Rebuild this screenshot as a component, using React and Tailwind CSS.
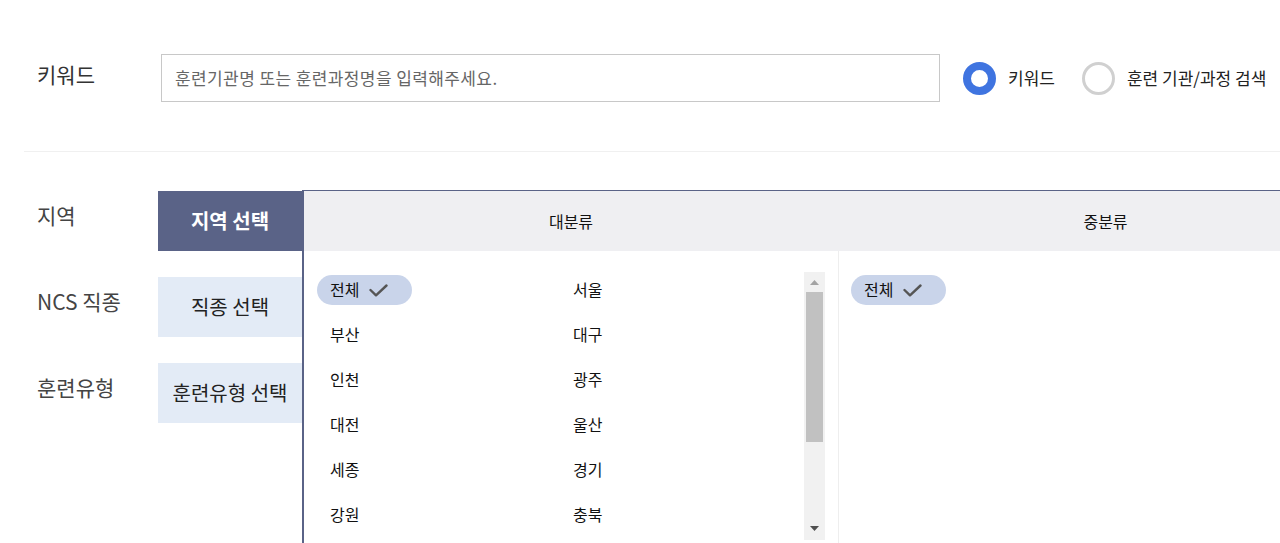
import React from "react";

const font = { fontFamily: "'Noto Sans CJK KR', 'Noto Sans', sans-serif" };

function Check() {
  return (
    <svg width="19" height="13" viewBox="0 0 19 13" fill="none">
      <polyline points="1.5,6 7,11.3 17.5,1.5" stroke="#555" strokeWidth="2.4" strokeLinecap="round" strokeLinejoin="round" />
    </svg>
  );
}

function Chip() {
  return (
    <div className="inline-flex h-[30px] items-center gap-[10px] rounded-full bg-[#c9d4ea] pl-[13px] pr-[24px] text-[16px] text-[#111]">
      <span className="pb-[2px]">전체</span>
      <Check />
    </div>
  );
}

const regions = [
  ["전체", "서울"],
  ["부산", "대구"],
  ["인천", "광주"],
  ["대전", "울산"],
  ["세종", "경기"],
  ["강원", "충북"],
];

export default function App() {
  return (
    <div className="h-[543px] w-full overflow-hidden bg-white pl-[24px]" style={font}>
      {/* keyword row */}
      <div className="flex items-center pl-[13px] pt-[54px]">
        <div className="w-[124px] pb-[8px] text-[21px] leading-none text-[#333]">키워드</div>
        <div className="flex h-[48px] w-[779px] items-center border border-[#c8c8c8] pl-[13px] text-[17px] tracking-[0.4px] text-[#666]">
          훈련기관명 또는 훈련과정명을 입력해주세요.
        </div>
        <div className="ml-[23px] flex items-center">
          <span className="box-border h-[33px] w-[33px] rounded-full border-[8.5px] border-[#3f74e0] bg-white" />
          <span className="ml-[12px] text-[17px] text-[#222]">키워드</span>
          <span className="ml-[27px] box-border h-[33px] w-[33px] rounded-full border-[3px] border-[#d0d0d0] bg-white" />
          <span className="ml-[12px] whitespace-nowrap text-[17px] text-[#222]">훈련 기관/과정 검색</span>
        </div>
      </div>

      <div className="mt-[49px] h-px w-full bg-[#f0f0f0]" />

      {/* filter section */}
      <div className="mt-[38px] flex">
        <div className="flex flex-col gap-[26px] pl-[13px] pt-px">
          {[
            ["지역", "지역 선택", true],
            ["NCS 직종", "직종 선택", false],
            ["훈련유형", "훈련유형 선택", false],
          ].map(([label, tab, active]) => (
            <div key={label} className="flex h-[60px] items-center">
              <div className="w-[121px] pb-[12px] text-[21px] leading-none text-[#444]">{label}</div>
              <div
                className={
                  active
                    ? "flex h-full w-[144px] items-center justify-center bg-[#5a6387] text-[20px] font-bold text-white"
                    : "flex h-full w-[144px] items-center justify-center bg-[#e3ebf6] text-[20px] text-[#222]"
                }
              >
                {tab}
              </div>
            </div>
          ))}
        </div>

        <div className="w-[1080px] shrink-0 border-l-2 border-t border-[#5a6387]">
          <div className="flex h-[60px] bg-[#efeff2] text-[16px] text-[#111]">
            <div className="flex w-[534px] items-center justify-center">대분류</div>
            <div className="flex w-[534px] items-center justify-center pl-px">중분류</div>
          </div>
          <div className="flex h-[400px]">
            <div className="flex w-[535px] items-start border-r border-[#eeeeee] pl-[13px] pr-[13px] pt-[21px]">
              <div className="flex-1 pt-[3px]">
                <div className="grid grid-cols-[243px_243px] gap-y-[15px] text-[16px] text-[#111]">
                  {regions.map(([a, b], i) => (
                    <React.Fragment key={a}>
                      <div className="flex h-[30px] items-center">
                        {i === 0 ? <Chip /> : <span className="pb-[3px] pl-[13px]">{a}</span>}
                      </div>
                      <div className="flex h-[30px] items-center">
                        <span className="pb-[3px] pl-[13px]">{b}</span>
                      </div>
                    </React.Fragment>
                  ))}
                </div>
              </div>
              <div className="flex h-[268px] w-[21px] flex-col items-center bg-[#f1f1f1]">
                <div className="flex h-[20px] items-center justify-center">
                  <svg width="9" height="5" viewBox="0 0 9 5"><polygon points="0,5 9,5 4.5,0" fill="#a3a3a3" /></svg>
                </div>
                <div className="h-[150px] w-[17px] bg-[#c1c1c1]" />
                <div className="flex-1" />
                <div className="flex h-[20px] items-center justify-center pb-[3px]">
                  <svg width="9" height="5" viewBox="0 0 9 5"><polygon points="0,0 9,0 4.5,5" fill="#505050" /></svg>
                </div>
              </div>
            </div>
            <div className="pl-[12px] pt-[24px]">
              <Chip />
            </div>
          </div>
        </div>
      </div>
    </div>
  );
}
